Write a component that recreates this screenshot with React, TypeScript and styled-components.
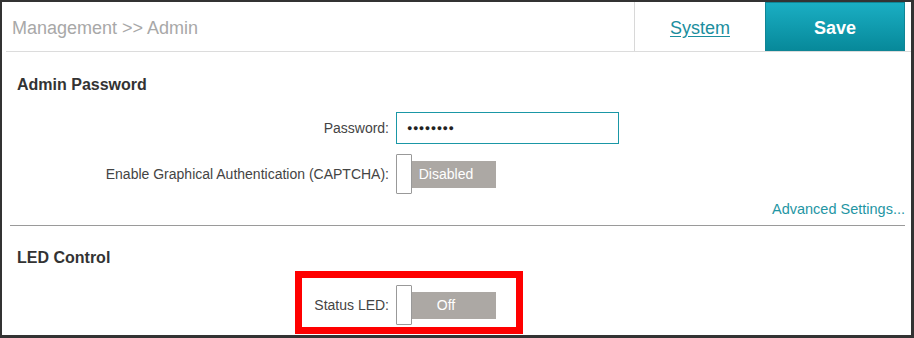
import React from "react";
import styled, { createGlobalStyle } from "styled-components";

const GlobalStyle = createGlobalStyle`
  html, body { margin: 0; padding: 0; background: #ffffff; }
  body { font-family: "Liberation Sans", Arial, sans-serif; }
  * { box-sizing: border-box; }
`;

const Frame = styled.div`
  position: relative;
  width: 914px;
  height: 338px;
  border-style: solid;
  border-color: #333333;
  border-width: 2px 3px 3px 2px;
  background: #ffffff;
  overflow: hidden;
  display: flex;
  flex-direction: column;
`;

const Header = styled.div`
  display: flex;
  height: 50px;
  margin-left: 4px;
  border-bottom: 1px solid #dcdcdc;
  padding-right: 6px;
`;

const Title = styled.div`
  flex: 1;
  display: flex;
  align-items: center;
  padding-left: 6px;
  padding-top: 3px;
  font-size: 18px;
  color: #a8a8a8;
`;

const TabLink = styled.div`
  width: 131px;
  display: flex;
  align-items: center;
  justify-content: center;
  padding-top: 3px;
  border-left: 1px solid #d8d8d8;
  font-size: 18px;
  color: #1b8e9e;
  text-decoration: underline;
  text-underline-offset: 2px;
`;

const SaveButton = styled.div`
  width: 140px;
  display: flex;
  align-items: center;
  justify-content: center;
  padding-top: 3px;
  background: linear-gradient(#1aaec3, #07899a);
  border: 1px solid #0f8595;
  color: #ffffff;
  font-size: 18px;
  font-weight: bold;
`;

const Section = styled.section<{ $top: number }>`
  display: flex;
  flex-direction: column;
  padding: ${(p) => p.$top}px 6px 0 15px;
`;

const Heading = styled.h2`
  margin: 0;
  font-size: 16px;
  line-height: 20px;
  font-weight: bold;
  color: #333333;
`;

const Row = styled.div<{ $top: number }>`
  display: grid;
  grid-template-columns: 372px auto;
  column-gap: 7px;
  align-items: center;
  margin-top: ${(p) => p.$top}px;
`;

const Label = styled.label`
  text-align: right;
  font-size: 14px;
  color: #444444;
`;

const PasswordBox = styled.div`
  width: 223px;
  height: 32px;
  border: 1px solid #1a97a6;
  display: flex;
  align-items: center;
  padding-left: 10px;
  font-size: 9px;
  letter-spacing: 0.5px;
  color: #222222;
`;

const Toggle = styled.div`
  position: relative;
  width: 100px;
  height: 40px;
  display: flex;
  align-items: center;
`;

const Track = styled.div`
  width: 100px;
  height: 27px;
  background: #aca8a4;
  color: #ffffff;
  font-size: 14px;
  display: flex;
  align-items: center;
  justify-content: center;
`;

const Knob = styled.div`
  position: absolute;
  left: 0;
  top: 0;
  width: 16px;
  height: 40px;
  background: #ffffff;
  border: 1px solid #999999;
  border-radius: 1px;
`;

const AdvancedLink = styled.div`
  align-self: flex-end;
  margin-top: 7px;
  font-size: 14.5px;
  line-height: 16px;
  color: #1f96a4;
`;

const Divider = styled.hr`
  margin: 8px 6px 0 8px;
  border: none;
  border-top: 1px solid #9a9a9a;
  height: 0;
`;

const Highlight = styled.div`
  position: absolute;
  left: 293px;
  top: 269px;
  width: 228px;
  height: 63px;
  border: 7px solid #ff0000;
  pointer-events: none;
`;

const Switch: React.FC<{ text: string }> = ({ text }) => (
  <Toggle>
    <Track>{text}</Track>
    <Knob />
  </Toggle>
);

export default function App() {
  return (
    <>
      <GlobalStyle />
      <Frame>
        <Header>
          <Title>Management &gt;&gt; Admin</Title>
          <TabLink>System</TabLink>
          <SaveButton>Save</SaveButton>
        </Header>
        <Section $top={23}>
          <Heading>Admin Password</Heading>
          <Row $top={17}>
            <Label>Password:</Label>
            <PasswordBox>●●●●●●●●</PasswordBox>
          </Row>
          <Row $top={10}>
            <Label>Enable Graphical Authentication (CAPTCHA):</Label>
            <Switch text="Disabled" />
          </Row>
          <AdvancedLink>Advanced Settings...</AdvancedLink>
        </Section>
        <Divider />
        <Section $top={22}>
          <Heading>LED Control</Heading>
          <Row $top={17}>
            <Label>Status LED:</Label>
            <Switch text="Off" />
          </Row>
        </Section>
        <Highlight />
      </Frame>
    </>
  );
}
